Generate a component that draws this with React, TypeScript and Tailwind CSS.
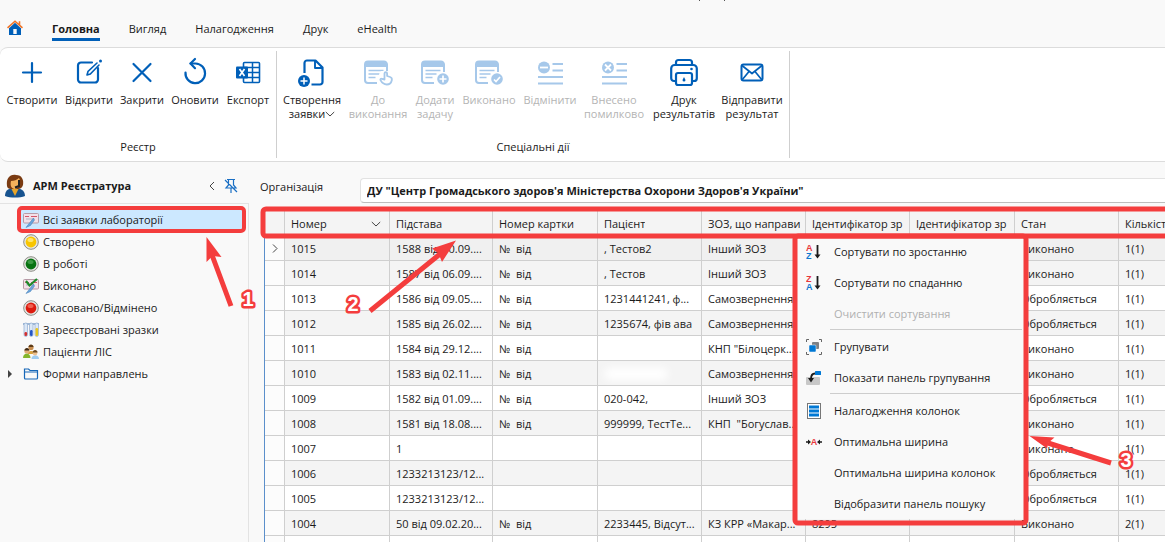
import type { ReactNode } from 'react';

const tabs = ['Головна', 'Вигляд', 'Налагодження', 'Друк', 'eHealth'];

const PlusIcon = () => (
  <svg width="32" height="32" viewBox="0 0 32 32" fill="none" stroke="currentColor" strokeWidth="2.2" strokeLinecap="round">
    <path d="M16 7v19M7 16.5h18" />
  </svg>
);

const OpenIcon = () => (
  <svg width="32" height="32" viewBox="0 0 32 32" fill="none" stroke="currentColor" strokeWidth="2.2" strokeLinecap="round">
    <path d="M19 6.5H8a3 3 0 0 0-3 3v14a3 3 0 0 0 3 3h14a3 3 0 0 0 3-3V12" />
    <path d="M14 19l1-3.5L24 7M14 19l3.300-1L26 9" strokeWidth="1.600" />
    <circle cx="27.500" cy="5" r="1.500" fill="currentColor" stroke="none" />
  </svg>
);

const CloseIcon = () => (
  <svg width="32" height="32" viewBox="0 0 32 32" fill="none" stroke="currentColor" strokeWidth="2.200" strokeLinecap="round">
    <path d="M7.500 8l17 17M24.500 8l-17 17" />
  </svg>
);

const RefreshIcon = () => (
  <svg width="32" height="32" viewBox="0 0 32 32" fill="none" stroke="currentColor" strokeWidth="2.200" strokeLinecap="round" strokeLinejoin="round">
    <path d="M6.500 16.500A9.800 9.800 0 1 0 16.500 7.500L11.500 7.500" />
    <path d="M16 3l-4.500 4.500 4.500 4.700" />
  </svg>
);

const ExcelIcon = () => (
  <svg width="32" height="32" viewBox="0 0 32 32" fill="none">
    <rect x="11.500" y="6.500" width="16" height="20" rx="1" stroke="currentColor" strokeWidth="1.600" />
    <path d="M11 11.500h16M11 16.500h16M11 21.500h16M20.500 6.500v20" stroke="currentColor" strokeWidth="1.500" />
    <rect x="4" y="10.500" width="12" height="12" rx="1" fill="currentColor" />
    <path d="M7.500 13l5 7M12.500 13l-5 7" stroke="white" strokeWidth="1.700" />
  </svg>
);

const NewDocIcon = () => (
  <svg width="32" height="32" viewBox="0 0 32 32" fill="none" stroke="currentColor" strokeWidth="2.200" strokeLinejoin="round">
    <path d="M8.500 17V7a2.500 2.500 0 0 1 2.500-2.500h8.500l7 7V26a2.500 2.500 0 0 1-2.500 2.500h-8.500" />
    <path d="M19 5v7h7" strokeWidth="1.900" />
    <circle cx="8" cy="25" r="6" fill="currentColor" stroke="none" />
    <path d="M8 21.500v7M4.500 25h7" stroke="white" strokeWidth="1.500" />
  </svg>
);

const TaskIcon = ({ children }: { children: ReactNode }) => (
  <svg width="32" height="32" viewBox="0 0 32 32" fill="none" stroke="currentColor" strokeWidth="2">
    <path d="M15 27H6a3 3 0 0 1-3-3V8.500a3 3 0 0 1 3-3h16a3 3 0 0 1 3 3V16" />
    <path d="M3 11V8a3 3 0 0 1 3-3h16a3 3 0 0 1 3 3v3z" fill="currentColor" stroke="none" />
    <path d="M6.500 14.500h15M6.500 18h11M6.500 21.500h7" strokeWidth="1.600" />
    {children}
  </svg>
);

// Tapping hand in the corner of the task card
const ToDoIcon = () => (
  <TaskIcon>
    <path d="M19 15h7l5 4v10H18l-3-6z" fill="white" stroke="none" />
    <path
      d="M22.500 23.500v-6a1.300 1.300 0 0 1 2.600 0v2.500l3 1c1.600.600 2 1.800 1.700 3.200-.600 2.800-2.300 4.300-5 4.300-3 0-5-1.800-6.300-4.300-.500-1.200.500-2 1.500-1.300z"
      strokeWidth="1.800"
      strokeLinejoin="round"
    />
  </TaskIcon>
);

const AddTaskIcon = () => (
  <TaskIcon>
    <circle cx="24" cy="23" r="7" fill="white" stroke="none" />
    <circle cx="24" cy="23" r="5.800" fill="currentColor" stroke="none" />
    <path d="M24 19.500v7M20.500 23h7" stroke="white" strokeWidth="1.700" />
  </TaskIcon>
);

const DoneIcon = () => (
  <TaskIcon>
    <circle cx="24" cy="23" r="7" fill="white" stroke="none" />
    <circle cx="24" cy="23" r="5.800" fill="currentColor" stroke="none" />
    <path d="M21 23.500l2 2 4-4.500" stroke="white" strokeWidth="1.700" />
  </TaskIcon>
);

const ListIcon = ({ mark }: { mark: string }) => (
  <svg width="32" height="32" viewBox="0 0 32 32" fill="none" stroke="currentColor" strokeWidth="1.800">
    <circle cx="10" cy="11.500" r="6" fill="currentColor" stroke="none" />
    <path d={mark} stroke="white" />
    <path d="M18.500 8H29M18.500 14.500H29M4 21h25M4 27.500h25" />
  </svg>
);

const MinusListIcon = () => <ListIcon mark="M6 11.500h8" />;
const CrossListIcon = () => <ListIcon mark="M7 8.500l6 6M13 8.500l-6 6" />;

const PrinterIcon = () => (
  <svg width="32" height="32" viewBox="0 0 32 32" fill="none" stroke="currentColor" strokeWidth="2.200" strokeLinejoin="round">
    <path d="M8 9V6.500A2.500 2.500 0 0 1 10.500 4h11A2.500 2.500 0 0 1 24 6.500V9" />
    <path d="M8 25H6a2.800 2.800 0 0 1-2.800-2.800V12.500A3.500 3.500 0 0 1 6.700 9h18.600a3.500 3.500 0 0 1 3.500 3.500v9.700A2.800 2.800 0 0 1 26 25h-2" />
    <rect x="8" y="17" width="16" height="12" rx="2" />
    <circle cx="23.500" cy="13" r="1.300" fill="currentColor" stroke="none" />
    <path d="M16 21l1.500 3a1.500 1.500 0 1 1-3 0z" fill="currentColor" stroke="none" />
  </svg>
);

const MailIcon = () => (
  <svg width="32" height="32" viewBox="0 0 32 32" fill="none" stroke="currentColor" strokeWidth="2" strokeLinejoin="round">
    <rect x="5.500" y="8.500" width="21" height="16" rx="2" />
    <path d="M6 9.500l10 8 10-8M6 24l7-8.500M26 24l-7-8.500" strokeWidth="1.700" />
  </svg>
);

const ChevronDown = ({ className = '' }: { className?: string }) => (
  <svg className={className} width="10" height="8" viewBox="0 0 10 8" fill="none" stroke="#444">
    <path d="M.8 2l4.200 4 4.200-4" />
  </svg>
);

type RibbonItem = {
  lines: string[];
  icon: () => ReactNode;
  width: string;
  disabled?: boolean;
  menu?: boolean;
};

const registryItems: RibbonItem[] = [
  { lines: ['Створити'], icon: PlusIcon, width: 'w-14' },
  { lines: ['Відкрити'], icon: OpenIcon, width: 'w-[58px]' },
  { lines: ['Закрити'], icon: CloseIcon, width: 'w-12' },
  { lines: ['Оновити'], icon: RefreshIcon, width: 'w-[58px]' },
  { lines: ['Експорт'], icon: ExcelIcon, width: 'w-12' },
];

const specialItems: RibbonItem[] = [
  { lines: ['Створення', 'заявки'], icon: NewDocIcon, width: 'w-[62px]', menu: true },
  { lines: ['До', 'виконання'], icon: ToDoIcon, width: 'w-[70px]', disabled: true },
  { lines: ['Додати', 'задачу'], icon: AddTaskIcon, width: 'w-11', disabled: true },
  { lines: ['Виконано'], icon: DoneIcon, width: 'w-16', disabled: true },
  { lines: ['Відмінити'], icon: MinusListIcon, width: 'w-[58px]', disabled: true },
  { lines: ['Внесено', 'помилково'], icon: CrossListIcon, width: 'w-[70px]', disabled: true },
  { lines: ['Друк', 'результатів'], icon: PrinterIcon, width: 'w-[70px]' },
  { lines: ['Відправити', 'результат'], icon: MailIcon, width: 'w-[66px]' },
];

const RibbonGroup = ({ title, items }: { title: string; items: RibbonItem[] }) => (
  <section className="flex flex-col justify-between px-1 pt-2 pb-1.5">
    <div className="flex">
      {items.map(({ lines, icon: Icon, width, disabled, menu }) => (
        <button
          key={lines.join(' ')}
          disabled={disabled}
          className={`flex shrink-0 flex-col items-center whitespace-nowrap leading-[14px] ${width} ${
            disabled ? 'text-[#b4b4b4]' : 'text-[#1b1b1b]'
          }`}
        >
          <span className={`mb-[5px] ${disabled ? 'text-[#a6c8ea]' : 'text-[#005fb8]'}`}>
            <Icon />
          </span>
          {lines.map((line, i) => (
            <span key={line} className="flex items-center">
              {line}
              {menu && i === 1 && <ChevronDown />}
            </span>
          ))}
        </button>
      ))}
    </div>
    <h2 className="text-center leading-4">{title}</h2>
  </section>
);

const HomeIcon = () => (
  <svg width="16" height="16" viewBox="0 0 16 16">
    <path d="M2 8.200l6-5.500 6 5.500V15H2z" fill="#005fb8" />
    <rect x="6.300" y="9" width="3.400" height="5" fill="#f8f8f8" />
    <path d="M.5 7.800L8 1.200l7.500 6.600M12.500 1.200V5" stroke="#f07427" strokeWidth="1.600" fill="none" />
  </svg>
);

const AvatarIcon = () => (
  <svg width="22" height="24" viewBox="0 0 22 24">
    <path d="M1 22c0-6 4-8 9.500-8S21 16 21 22c-5 2-15 2-20 0z" fill="#17538f" />
    <path d="M7 14l4 8 4-8z" fill="#e7a52a" />
    <path d="M3 12C2 4 6 0 12 1c6 0 8 5 7 10-1 3-3 4-5 4H7c-2 0-4-1-4-3z" fill="#7a3b12" />
    <path d="M7 7c3 0 6-1 8-3 2 3 1 10-4 11-4 0-5-4-4-8z" fill="#f4b25c" />
    <path d="M15 6v6l-4 1.500" stroke="#222" strokeWidth="2" fill="none" />
  </svg>
);

const PinIcon = () => (
  <svg width="14" height="16" viewBox="0 0 14 16" fill="none" stroke="#1a6fc4" strokeWidth="1.200">
    <path d="M3 1.500h8M4.500 2v5L2 10h10L9.500 7V2M7 10v5M1 2l12 12" />
  </svg>
);

const CardIcon = ({ done }: { done?: boolean }) => (
  <svg width="16" height="16" viewBox="0 0 16 16">
    <rect x=".5" y="1.500" width="15" height="9.500" rx="1" fill="#f3e0e8" stroke="#b79aa6" />
    <path d="M2 4.500h4M8 4.500h6" stroke="#d2566a" />
    <path d="M3 7h8" stroke="#a9b3c5" />
    <path d="M10.500 6L6.500 11 3 15.500l4.500-2L11.500 8z" fill="#6aa5dc" stroke="#3d78b5" strokeWidth=".5" />
    {done && <path d="M3 3l3.500 4.500L14 1" stroke="#1c8a2a" strokeWidth="2.200" fill="none" />}
  </svg>
);

const StatusIcon = ({ color, light }: { color: string; light: string }) => (
  <svg width="16" height="16" viewBox="0 0 16 16">
    <circle cx="8" cy="8" r="7.300" fill="#e6e6e3" stroke="#8d8d86" />
    <circle cx="8" cy="8" r="5.400" fill={color} />
    <ellipse cx="7.500" cy="6" rx="3" ry="2" fill={light} />
  </svg>
);

const TubesIcon = () => (
  <svg width="16" height="16" viewBox="0 0 16 16">
    <path d="M0 2h16" stroke="#9fb8d6" strokeWidth="2" />
    {['#d33030', '#2354c4', '#e8c51e'].map((fill, i) => (
      <g key={fill} transform={`translate(${i * 5.500 + 0.500} 0)`}>
        <rect x=".5" y="1" width="3.500" height="13.500" rx="1.700" fill="#dbe8f7" stroke="#8fabd0" strokeWidth=".7" />
        <rect x="1" y={10 - i * 2} width="2.600" height={4 + i * 2} rx="1.200" fill={fill} />
      </g>
    ))}
  </svg>
);

const PatientsIcon = () => (
  <svg width="16" height="16" viewBox="0 0 16 16">
    <path d="M4.500 10c0-4 7-4 7.500 0z" fill="#d9a33c" />
    <circle cx="8" cy="3.500" r="2.600" fill="#c98e4f" />
    <path d="M5.500 3c0-3.500 5-3.500 5 0z" fill="#5c3a17" />
    <path d="M0 14c0-6 7.500-6 7.500 0z" fill="#84b52c" />
    <circle cx="3.800" cy="7" r="2.500" fill="#e0ae78" />
    <path d="M1.400 6.500c0-3.500 5-3.500 5 0z" fill="#3f2a16" />
    <path d="M8.500 15c0-5 7.500-5 7.500 0z" fill="#9fcdf2" />
    <circle cx="12" cy="9" r="2.400" fill="#edc08e" />
    <path d="M9.600 8.500c0-3.500 5-3.500 5 0z" fill="#6b4a22" />
  </svg>
);

const FolderIcon = () => (
  <svg width="16" height="16" viewBox="0 0 16 16" fill="none" stroke="#1667b8" strokeWidth="1.200">
    <path d="M1.500 12V3h4l1.500 1.500h7.500V12a1 1 0 0 1-1 1h-11a1 1 0 0 1-1-1zM1.500 6h13" />
  </svg>
);

const treeItems = [
  { label: 'Всі заявки лабораторії', icon: <CardIcon />, selected: true },
  { label: 'Створено', icon: <StatusIcon color="#f8c500" light="#ffe56b" /> },
  { label: 'В роботі', icon: <StatusIcon color="#087312" light="#3c9a43" /> },
  { label: 'Виконано', icon: <CardIcon done /> },
  { label: 'Скасовано/Відмінено', icon: <StatusIcon color="#dc1a0e" light="#f0604f" /> },
  { label: 'Зареєстровані зразки', icon: <TubesIcon /> },
  { label: 'Пацієнти ЛІС', icon: <PatientsIcon /> },
  { label: 'Форми направлень', icon: <FolderIcon />, expandable: true },
];

const Sidebar = () => (
  <aside className="flex w-[249px] shrink-0 flex-col">
    <header className="flex h-10 items-center border-b border-[#e3e3e3] pt-1 pr-[11px] pl-1">
      <AvatarIcon />
      <h1 className="ml-[7px] flex-1 font-bold">АРМ Реєстратура</h1>
      <button aria-label="Згорнути" className="mr-2">
        <svg width="8" height="10" viewBox="0 0 8 10" fill="none" stroke="#444">
          <path d="M6 1L2 5l4 4" />
        </svg>
      </button>
      <button aria-label="Відкріпити">
        <PinIcon />
      </button>
    </header>
    <ul className="flex-1 border-r border-[#e3e3e3] pt-[5px] pr-1.5">
      {treeItems.map(({ label, icon, selected, expandable }) => (
        <li key={label} className="flex h-[22px] items-center">
          <span className="flex w-5 shrink-0 justify-center">
            {expandable && (
              <svg width="4" height="8" viewBox="0 0 4 8">
                <path d="M0 0l4 4-4 4z" fill="#444" />
              </svg>
            )}
          </span>
          <button
            className={`flex h-full flex-1 items-center gap-1 pl-[3px] text-left ${selected ? 'bg-[#cce8ff]' : ''}`}
          >
            {icon}
            {label}
          </button>
        </li>
      ))}
    </ul>
  </aside>
);

const columns = [
  { title: '', width: 'w-5' },
  { title: 'Номер', width: 'w-[105px]' },
  { title: 'Підстава', width: 'w-[103px]' },
  { title: 'Номер картки', width: 'w-[105px]' },
  { title: 'Пацієнт', width: 'w-[104px]' },
  { title: 'ЗОЗ, що направи', width: 'w-[104px]' },
  { title: 'Ідентифікатор зр', width: 'w-[104px]' },
  { title: 'Ідентифікатор зр', width: 'w-[105px]' },
  { title: 'Стан', width: 'w-[104px]' },
  { title: 'Кількість', width: 'w-[110px]' },
];

const rows = [
  ['1015', '1588 від 10.09....', '№  від', ', Тестов2', 'Інший ЗОЗ', '', '', 'Виконано', '1(1)'],
  ['1014', '1587 від 06.09....', '№  від', ', Тестов', 'Інший ЗОЗ', '', '', 'Виконано', '1(1)'],
  ['1013', '1586 від 09.05....', '№  від', '1231441241, ф...', 'Самозвернення', '', '', 'Обробляється', '1(1)'],
  ['1012', '1585 від 26.02....', '№  від', '1235674, фів ава', 'Самозвернення', '', '', 'Обробляється', '1(1)'],
  ['1011', '1584 від 29.12....', '№  від', '', 'КНП "Білоцерк...', '', '', 'Виконано', '1(1)'],
  ['1010', '1583 від 02.11....', '№  від', '', 'Самозвернення', '', '', 'Виконано', '1(1)'],
  ['1009', '1582 від 01.09....', '№  від', '020-042,', 'Інший ЗОЗ', '', '', 'Обробляється', '1(1)'],
  ['1008', '1581 від 18.08....', '№  від', '999999, ТестТе...', 'КНП  "Богуслав...', '', '', 'Виконано', '1(1)'],
  ['1007', '1', '', '', '', '', '', 'Виконано', '1(1)'],
  ['1006', '1233213123/12...', '', '', '', '', '', 'Обробляється', '1(1)'],
  ['1005', '1233213123/12...', '', '', '', '', '', 'Обробляється', '1(1)'],
  ['1004', '50 від 09.02.20...', '№  від', '2233445, Відсут...', 'КЗ КРР «Макар...', '8295', '', 'Виконано', '2(1)'],
  ['', '', '', '', '', '', '', '', ''],
];

const rowColor = (index: number) => {
  if (index === 0) return 'bg-[#f0f0f0]';
  return index % 2 ? 'bg-[#f4f4f4]' : 'bg-white';
};

const RequestsTable = () => (
  <table className="w-[964px] table-fixed border-separate border-spacing-0 border-l border-[#5b8fcb]">
    <thead>
      <tr className="h-[25px] bg-[#f4f4f4]">
        {columns.map(({ title, width }, i) => (
          <th
            key={i}
            className={`border-r border-b border-[#cfcfcf] p-0 pt-px text-left font-normal ${width} ${i ? 'pr-1 pl-1.5' : ''}`}
          >
            <div className="flex items-center justify-between">
              <span className="overflow-hidden whitespace-nowrap">{title}</span>
              {i === 1 && <ChevronDown className="mr-1 shrink-0" />}
            </div>
          </th>
        ))}
      </tr>
    </thead>
    <tbody>
      {rows.map((row, i) => (
        <tr key={i} className={`h-[25px] ${rowColor(i)}`}>
          <td className="border-r border-b border-[#cfcfcf] bg-[#fcfcfc] p-0">
            {i === 0 && (
              <svg className="mx-auto" width="6" height="9" viewBox="0 0 6 9" fill="none" stroke="#444">
                <path d="M1 .5l4 4-4 4" />
              </svg>
            )}
          </td>
          {row.map((cell, j) => (
            <td key={j} className="overflow-hidden border-r border-b border-[#cfcfcf] p-0 pt-px pl-1.5 whitespace-pre">
              {cell}
              {i === 5 && j === 3 && <span className="block h-3 w-16 rounded-full bg-white blur-xs" />}
            </td>
          ))}
        </tr>
      ))}
    </tbody>
  </table>
);

const SortIcon = ({ top, bottom }: { top: string; bottom: string }) => (
  <svg width="16" height="16" viewBox="0 0 16 16" className="font-['Liberation_Sans',sans-serif] font-bold">
    <text x="0" y="7" fontSize="9" fill="#e8383d">{top}</text>
    <text x="0" y="15" fontSize="9" fill="#0f78d0">{bottom}</text>
    <path d="M11.500 1v10" stroke="#1b1b1b" strokeWidth="1.800" />
    <path d="M8.500 10.500h6l-3 4z" fill="#1b1b1b" />
  </svg>
);

const GroupIcon = () => (
  <svg width="16" height="16" viewBox="0 0 16 16">
    <path d="M3 .5H.5V3M13 .5h2.500V3M3 15.500H.5V13M13 15.500h2.500V13" stroke="#666" fill="none" />
    <rect x="6" y="3" width="7" height="7" rx="1" fill="#7e8185" />
    <rect x="3" y="6" width="7" height="7" rx="1" fill="#0078d4" stroke="#f9f9f9" strokeWidth=".5" />
  </svg>
);

const GroupPanelIcon = () => (
  <svg width="16" height="16" viewBox="0 0 16 16">
    <rect x="0" y="7" width="14" height="8" rx="1" fill="#c8c8c8" />
    <rect x="9" y="1" width="6" height="4" rx=".5" fill="#0078d4" />
    <path d="M9 3.500C6.500 3.500 5 5 5 9" stroke="#1b1b1b" strokeWidth="1.800" fill="none" />
    <path d="M2 8h6l-3 4.500z" fill="#1b1b1b" />
  </svg>
);

const ColumnsIcon = () => (
  <svg width="16" height="16" viewBox="0 0 16 16">
    <rect x="1.500" y=".5" width="13" height="15" fill="white" stroke="#777" />
    <path d="M3 4h10M3 8h10M3 12h10" stroke="#0078d4" strokeWidth="3" />
  </svg>
);

const WidthIcon = () => (
  <svg width="16" height="16" viewBox="0 0 16 16" className="font-['Liberation_Sans',sans-serif] font-bold">
    <text x="8" y="11" textAnchor="middle" fontSize="9" fill="#e8383d">A</text>
    <path d="M0 8h3M16 8h-3" stroke="#1b1b1b" strokeWidth="1.500" />
    <path d="M2 5.500L5 8l-3 2.500zM14 5.500L11 8l3 2.500z" fill="#1b1b1b" />
  </svg>
);

type MenuItem = { label: string; icon?: ReactNode; disabled?: boolean; divided?: boolean };

const menuItems: MenuItem[] = [
  { label: 'Сортувати по зростанню', icon: <SortIcon top="A" bottom="Z" /> },
  { label: 'Сортувати по спаданню', icon: <SortIcon top="Z" bottom="A" /> },
  { label: 'Очистити сортування', disabled: true },
  { label: 'Групувати', icon: <GroupIcon />, divided: true },
  { label: 'Показати панель групування', icon: <GroupPanelIcon /> },
  { label: 'Налагодження колонок', icon: <ColumnsIcon />, divided: true },
  { label: 'Оптимальна ширина', icon: <WidthIcon /> },
  { label: 'Оптимальна ширина колонок' },
  { label: 'Відобразити панель пошуку' },
];

const ColumnMenu = () => (
  <div role="menu" className="absolute top-[25px] left-[532px] w-[230px] bg-[#f9f9f9] pr-1 pl-2.5">
    {menuItems.map(({ label, icon, disabled, divided }) => (
      <div key={label}>
        {divided && <div className="mb-px ml-6 border-b border-[#cdcdcd]" />}
        <button
          role="menuitem"
          disabled={disabled}
          className={`flex h-[31px] w-full items-center gap-3 text-left whitespace-nowrap ${
            disabled ? 'text-[#b0b0b0]' : ''
          }`}
        >
          <span className="w-4">{icon}</span>
          {label}
        </button>
      </div>
    ))}
  </div>
);

const callouts = [
  { x: 248, y: 306, text: '1' },
  { x: 353, y: 311, text: '2' },
  { x: 1126, y: 467, text: '3' },
];

// Red frames, arrows and step numbers over the window
const Callouts = () => (
  <svg
    className="pointer-events-none absolute inset-0 h-full w-full font-['Liberation_Sans',sans-serif]"
    fill="none"
    stroke="#f43d3d"
    strokeWidth="5"
  >
    <rect x="19" y="208" width="225" height="23" rx="3" strokeWidth="4" />
    <rect x="263" y="209" width="940" height="27" rx="3" />
    <rect x="795" y="236" width="231" height="287" rx="3" />
    <path d="M231 306L212 255M370 311L440 254M1111 463L1048 443" />
    <path d="M206.500 237l15 20-9-1-6 6zM456 240.500l-24 8 6.500 5 3.500 8.500zM1029.500 436l25 1.500-6 5-1.500 6z" fill="#f43d3d" stroke="none" />
    {callouts.map(({ x, y, text }) => (
      <text
        key={text}
        x={x}
        y={y}
        textAnchor="middle"
        fontSize="20"
        fontWeight="bold"
        fill="white"
        strokeLinejoin="round"
        paintOrder="stroke"
      >
        {text}
      </text>
    ))}
  </svg>
);

export default function App() {
  return (
    <div className="relative flex h-screen flex-col overflow-hidden bg-[#f9f9f9] font-['Open_Sans','Noto_Sans',sans-serif] text-[11px] leading-[18px] text-[#1b1b1b]">
      {/* Lower edge of the scrolled-off title bar */}
      <div className="flex h-0.5 shrink-0 gap-6 pl-[699px]">
        <span className="h-px w-px bg-[#555]" />
        <span className="h-px w-px bg-[#555]" />
      </div>

      <nav className="flex h-[45px] shrink-0 items-start gap-[29px] pt-[18px] pl-[7px]">
        <a href="#home" aria-label="Додому">
          <HomeIcon />
        </a>
        {tabs.map((tab, i) => (
          <a key={tab} href={`#${tab}`} className={i === 0 ? 'border-b-[3px] border-[#005fb8] font-bold' : ''}>
            {tab}
          </a>
        ))}
      </nav>

      <div className="flex h-[115px] shrink-0 rounded-l-lg border-y border-[#dcdcdc] bg-white">
        <RibbonGroup title="Реєстр" items={registryItems} />
        <div className="my-[3px] w-px bg-[#cfcfcf]" />
        <RibbonGroup title="Спеціальні дії" items={specialItems} />
        <div className="my-[3px] w-px bg-[#cfcfcf]" />
      </div>

      <div className="flex min-h-0 flex-1 pt-0.5">
        <Sidebar />
        <main className="min-w-0 flex-1 pl-[11px]">
          <div className="mb-2 flex items-start pt-3.5">
            <label htmlFor="organization" className="w-[100px] shrink-0">
              Організація
            </label>
            <input
              id="organization"
              readOnly
              value={'ДУ "Центр Громадського здоров\'я Міністерства Охорони Здоров\'я України"'}
              className="h-[25px] min-w-0 flex-1 rounded-l border border-r-0 border-[#e2e2e2] border-b-[#bdbdbd] bg-white px-1.5 font-bold"
            />
          </div>
          <div className="relative ml-1">
            <RequestsTable />
            <ColumnMenu />
          </div>
        </main>
      </div>
      <Callouts />
    </div>
  );
}
